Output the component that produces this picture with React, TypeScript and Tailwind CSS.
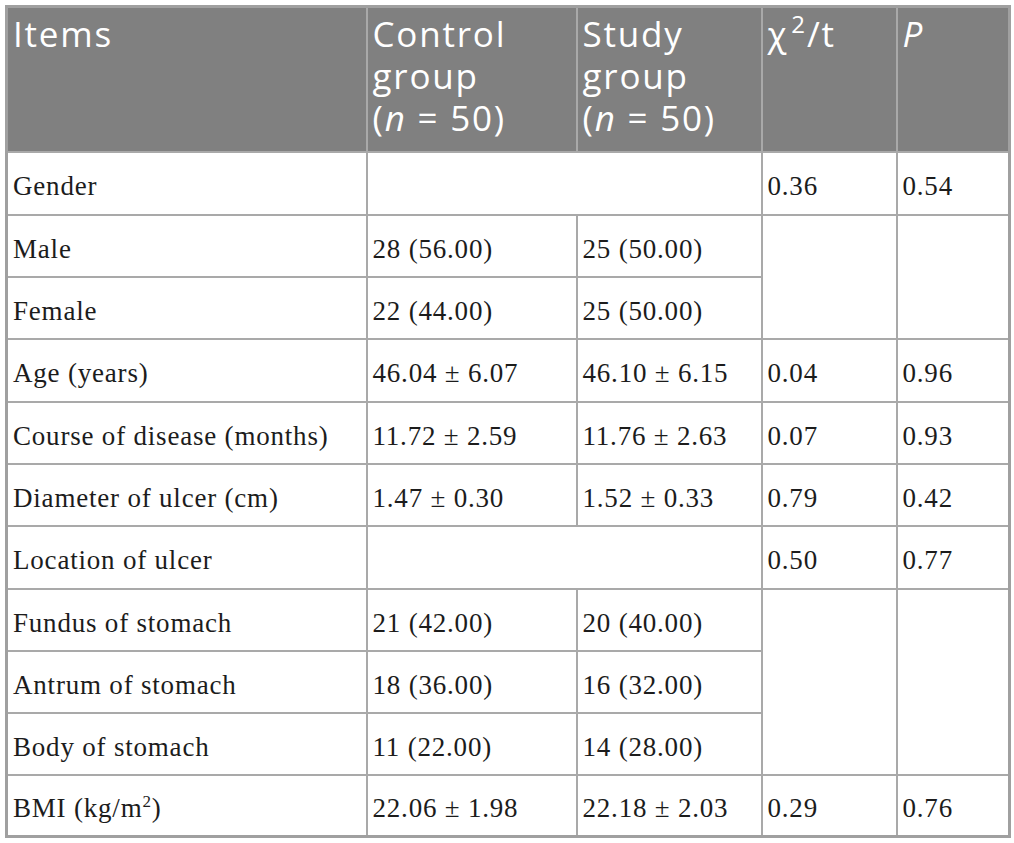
import React from "react";

const sans = "font-['Open_Sans',sans-serif]";
const serif = "font-['Liberation_Serif',serif]";

const th = `border-2 border-[#a9a9a9] bg-[#808080] text-white align-top text-left font-normal pl-[5px] pr-[4px] pt-[5px] text-[35px] leading-[42px] tracking-[1.8px] ${sans}`;
const td = `border-2 border-[#a9a9a9] align-middle text-left pl-[5px] pr-[4px] pt-[6px] text-[27px] leading-[30px] tracking-[0.8px] text-[#1c1c1c] ${serif}`;

export default function App() {
  return (
    <div className="bg-white w-[1014px] h-[843px] pt-[5px] pl-[5px]">
      <table className="table-fixed border-collapse border-[3px] border-[#a0a0a0] w-[1003px]">
        <colgroup>
          <col className="w-[360px]" />
          <col className="w-[210px]" />
          <col className="w-[185px]" />
          <col className="w-[135px]" />
          <col className="w-[113px]" />
        </colgroup>
        <thead>
          <tr className="h-[145px]">
            <th className={th}>Items</th>
            <th className={th}>
              Control
              <br />
              group
              <br />(<i>n</i> = 50)
            </th>
            <th className={th}>
              Study
              <br />
              group
              <br />(<i>n</i> = 50)
            </th>
            <th className={th}>
              χ<sup className="text-[24px] -top-[14px] ml-[3px]">2</sup>/t
            </th>
            <th className={th}>
              <i>P</i>
            </th>
          </tr>
        </thead>
        <tbody>
          <tr className="h-[63px]">
            <td className={td}>Gender</td>
            <td className={td} colSpan={2}></td>
            <td className={td}>0.36</td>
            <td className={td}>0.54</td>
          </tr>
          <tr className="h-[62px]">
            <td className={td}>Male</td>
            <td className={td}>28 (56.00)</td>
            <td className={td}>25 (50.00)</td>
            <td className={td} rowSpan={2}></td>
            <td className={td} rowSpan={2}></td>
          </tr>
          <tr className="h-[62px]">
            <td className={td}>Female</td>
            <td className={td}>22 (44.00)</td>
            <td className={td}>25 (50.00)</td>
          </tr>
          <tr className="h-[63px]">
            <td className={td}>Age (years)</td>
            <td className={td}>46.04 ± 6.07</td>
            <td className={td}>46.10 ± 6.15</td>
            <td className={td}>0.04</td>
            <td className={td}>0.96</td>
          </tr>
          <tr className="h-[62px]">
            <td className={td}>Course of disease (months)</td>
            <td className={td}>11.72 ± 2.59</td>
            <td className={td}>11.76 ± 2.63</td>
            <td className={td}>0.07</td>
            <td className={td}>0.93</td>
          </tr>
          <tr className="h-[62px]">
            <td className={td}>Diameter of ulcer (cm)</td>
            <td className={td}>1.47 ± 0.30</td>
            <td className={td}>1.52 ± 0.33</td>
            <td className={td}>0.79</td>
            <td className={td}>0.42</td>
          </tr>
          <tr className="h-[63px]">
            <td className={td}>Location of ulcer</td>
            <td className={td} colSpan={2}></td>
            <td className={td}>0.50</td>
            <td className={td}>0.77</td>
          </tr>
          <tr className="h-[62px]">
            <td className={td}>Fundus of stomach</td>
            <td className={td}>21 (42.00)</td>
            <td className={td}>20 (40.00)</td>
            <td className={td} rowSpan={3}></td>
            <td className={td} rowSpan={3}></td>
          </tr>
          <tr className="h-[62px]">
            <td className={td}>Antrum of stomach</td>
            <td className={td}>18 (36.00)</td>
            <td className={td}>16 (32.00)</td>
          </tr>
          <tr className="h-[62px]">
            <td className={td}>Body of stomach</td>
            <td className={td}>11 (22.00)</td>
            <td className={td}>14 (28.00)</td>
          </tr>
          <tr className="h-[62px]">
            <td className={td}>
              BMI (kg/m<sup className="text-[17px] -top-[10px]">2</sup>)
            </td>
            <td className={td}>22.06 ± 1.98</td>
            <td className={td}>22.18 ± 2.03</td>
            <td className={td}>0.29</td>
            <td className={td}>0.76</td>
          </tr>
        </tbody>
      </table>
    </div>
  );
}
